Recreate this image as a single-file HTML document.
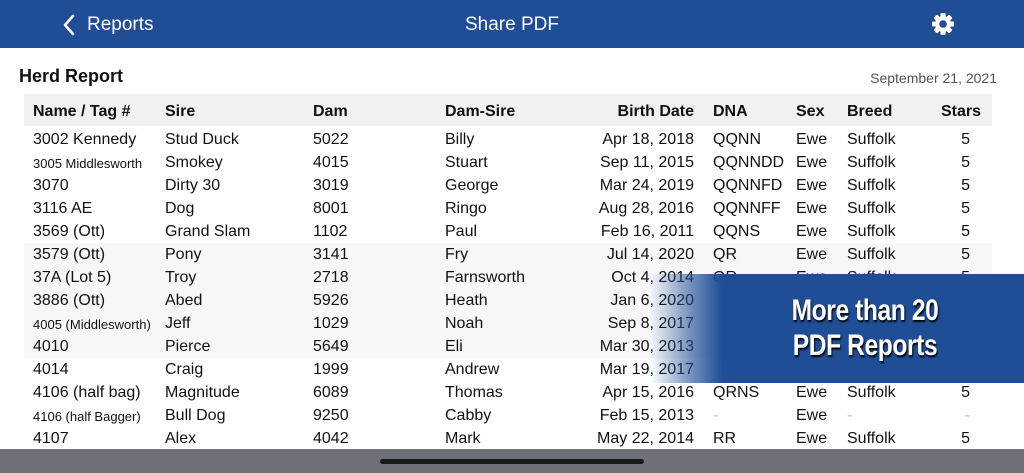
<!DOCTYPE html>
<html><head><meta charset="utf-8"><style>
*{margin:0;padding:0;box-sizing:border-box}
body{width:1024px;height:473px;overflow:hidden;background:#fff;font-family:"Liberation Sans",Arial,sans-serif;position:relative;color:#111}
.nav{position:absolute;left:0;top:0;width:1024px;height:48px;background:#1f4e97;color:#fff;font-size:19px}
.nav .t{position:absolute;top:14px}
.h1{position:absolute;left:19px;top:66px;font-size:18px;font-weight:bold}
.date{position:absolute;right:27px;top:70px;font-size:14px;color:#555}
.hdr{position:absolute;left:24px;top:94px;width:968px;height:32px;background:#f1f1f1}
.gray{position:absolute;left:24px;top:243px;width:968px;height:115px;background:#f7f7f7}
.r{position:absolute;left:0;width:1024px;height:23px;font-size:16px}
.r span{position:absolute;top:4px;white-space:nowrap}
.r.h span{font-weight:bold;top:9px}
.sm{font-size:13px;top:6px!important}
.bd{right:330px;text-align:right}
.st{right:54px}
.r.h .st{right:43px}
.bottom{position:absolute;left:0;top:449px;width:1024px;height:24px;background:#6e7078}
.handle{position:absolute;left:380px;top:459px;width:264px;height:5px;border-radius:3px;background:#1a1a1a}
.banner{position:absolute;left:650px;top:274px;width:374px;height:109px;background:linear-gradient(to right,rgba(31,78,151,0) 0px,rgba(31,78,151,0.6) 40px,#1f4e97 72px,#1f4e97 100%)}
.banner div{position:absolute;left:70px;width:290px;text-align:center;color:#fff;font-weight:bold;font-size:30px;line-height:35px;top:19px;text-shadow:1px 2px 2px #000;transform:scaleX(0.82);letter-spacing:-0.5px}
.dim{color:#bbb}
</style></head><body>
<div class="nav">
<svg style="position:absolute;left:62px;top:14px" width="14" height="22" viewBox="0 0 14 22"><path d="M11 2 L3 11 L11 20" stroke="#fff" stroke-width="2.6" fill="none" stroke-linecap="round" stroke-linejoin="round"/></svg>
<span class="t" style="left:87px">Reports</span>
<span class="t" style="left:465px">Share PDF</span>
<svg style="position:absolute;left:931px;top:12px" width="24" height="24" viewBox="0 0 24 24"><g fill="#fff"><circle cx="12" cy="12" r="8"/><rect x="9.5" y="1" width="5" height="22" rx="1"/><rect x="9.5" y="1" width="5" height="22" rx="1" transform="rotate(45 12 12)"/><rect x="9.5" y="1" width="5" height="22" rx="1" transform="rotate(90 12 12)"/><rect x="9.5" y="1" width="5" height="22" rx="1" transform="rotate(135 12 12)"/></g><circle cx="12" cy="12" r="3.8" fill="#1f4e97"/></svg>
</div>
<div class="h1">Herd Report</div>
<div class="date">September 21, 2021</div>
<div class="hdr"></div>
<div class="gray"></div>
<div class="r h" style="top:94px"><span style="left:33px">Name / Tag #</span><span style="left:165px">Sire</span><span style="left:313px">Dam</span><span style="left:445px">Dam-Sire</span><span class="bd">Birth Date</span><span style="left:713px">DNA</span><span style="left:796px">Sex</span><span style="left:847px">Breed</span><span class="st">Stars</span></div>

<div class="r" style="top:127px"><span style="left:33px">3002 Kennedy</span><span style="left:165px">Stud Duck</span><span style="left:313px">5022</span><span style="left:445px">Billy</span><span class="bd">Apr 18, 2018</span><span style="left:713px">QQNN</span><span style="left:796px">Ewe</span><span style="left:847px">Suffolk</span><span class="st">5</span></div>
<div class="r" style="top:150px"><span class="sm" style="left:33px">3005 Middlesworth</span><span style="left:165px">Smokey</span><span style="left:313px">4015</span><span style="left:445px">Stuart</span><span class="bd">Sep 11, 2015</span><span style="left:713px">QQNNDD</span><span style="left:796px">Ewe</span><span style="left:847px">Suffolk</span><span class="st">5</span></div>
<div class="r" style="top:173px"><span style="left:33px">3070</span><span style="left:165px">Dirty 30</span><span style="left:313px">3019</span><span style="left:445px">George</span><span class="bd">Mar 24, 2019</span><span style="left:713px">QQNNFD</span><span style="left:796px">Ewe</span><span style="left:847px">Suffolk</span><span class="st">5</span></div>
<div class="r" style="top:196px"><span style="left:33px">3116 AE</span><span style="left:165px">Dog</span><span style="left:313px">8001</span><span style="left:445px">Ringo</span><span class="bd">Aug 28, 2016</span><span style="left:713px">QQNNFF</span><span style="left:796px">Ewe</span><span style="left:847px">Suffolk</span><span class="st">5</span></div>
<div class="r" style="top:219px"><span style="left:33px">3569 (Ott)</span><span style="left:165px">Grand Slam</span><span style="left:313px">1102</span><span style="left:445px">Paul</span><span class="bd">Feb 16, 2011</span><span style="left:713px">QQNS</span><span style="left:796px">Ewe</span><span style="left:847px">Suffolk</span><span class="st">5</span></div>
<div class="r" style="top:242px"><span style="left:33px">3579 (Ott)</span><span style="left:165px">Pony</span><span style="left:313px">3141</span><span style="left:445px">Fry</span><span class="bd">Jul 14, 2020</span><span style="left:713px">QR</span><span style="left:796px">Ewe</span><span style="left:847px">Suffolk</span><span class="st">5</span></div>
<div class="r" style="top:265px"><span style="left:33px">37A (Lot 5)</span><span style="left:165px">Troy</span><span style="left:313px">2718</span><span style="left:445px">Farnsworth</span><span class="bd">Oct 4, 2014</span><span style="left:713px">QR</span><span style="left:796px">Ewe</span><span style="left:847px">Suffolk</span><span class="st">5</span></div>
<div class="r" style="top:288px"><span style="left:33px">3886 (Ott)</span><span style="left:165px">Abed</span><span style="left:313px">5926</span><span style="left:445px">Heath</span><span class="bd">Jan 6, 2020</span></div>
<div class="r" style="top:311px"><span class="sm" style="left:33px">4005 (Middlesworth)</span><span style="left:165px">Jeff</span><span style="left:313px">1029</span><span style="left:445px">Noah</span><span class="bd">Sep 8, 2017</span></div>
<div class="r" style="top:334px"><span style="left:33px">4010</span><span style="left:165px">Pierce</span><span style="left:313px">5649</span><span style="left:445px">Eli</span><span class="bd">Mar 30, 2013</span></div>
<div class="r" style="top:357px"><span style="left:33px">4014</span><span style="left:165px">Craig</span><span style="left:313px">1999</span><span style="left:445px">Andrew</span><span class="bd">Mar 19, 2017</span></div>
<div class="r" style="top:380px"><span style="left:33px">4106 (half bag)</span><span style="left:165px">Magnitude</span><span style="left:313px">6089</span><span style="left:445px">Thomas</span><span class="bd">Apr 15, 2016</span><span style="left:713px">QRNS</span><span style="left:796px">Ewe</span><span style="left:847px">Suffolk</span><span class="st">5</span></div>
<div class="r" style="top:403px"><span class="sm" style="left:33px">4106 (half Bagger)</span><span style="left:165px">Bull Dog</span><span style="left:313px">9250</span><span style="left:445px">Cabby</span><span class="bd">Feb 15, 2013</span><span class="dim" style="left:713px">-</span><span style="left:796px">Ewe</span><span class="dim" style="left:847px">-</span><span class="st dim">-</span></div>
<div class="r" style="top:426px"><span style="left:33px">4107</span><span style="left:165px">Alex</span><span style="left:313px">4042</span><span style="left:445px">Mark</span><span class="bd">May 22, 2014</span><span style="left:713px">RR</span><span style="left:796px">Ewe</span><span style="left:847px">Suffolk</span><span class="st">5</span></div>

<div class="banner"><div>More than 20<br>PDF Reports</div></div>
<div class="bottom"></div>
<div class="handle"></div>
</body></html>
